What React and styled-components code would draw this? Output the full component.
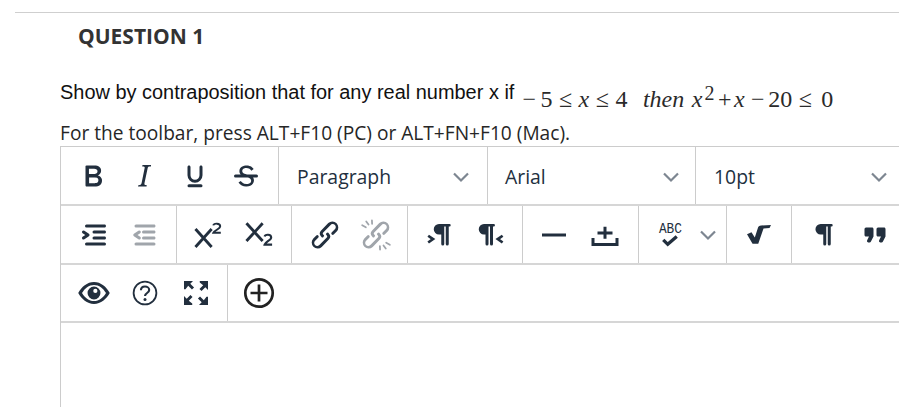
import React from "react";
import styled, { createGlobalStyle } from "styled-components";

const Global = createGlobalStyle`
  html, body { margin: 0; padding: 0; background: #fff; }
  body { width: 899px; height: 407px; overflow: hidden; }
`;
const Page = styled.div`
  width: 899px; height: 407px; overflow: hidden; padding-top: 12px; box-sizing: border-box;
`;
const Rule = styled.div`
  height: 1px; background: #cfcfcf; margin-left: 15px;
`;
const Heading = styled.h2`
  margin: 9px 0 0 78px; font: 700 21px/28px "Open Sans", sans-serif; color: #333;
`;
const Prompt = styled.div`
  margin: 22px 0 0 60px; height: 40px; display: flex; align-items: center;
  font: 19.95px/28px "Liberation Sans", Arial, sans-serif; color: #111; white-space: nowrap;
`;
const Formula = styled.div`
  margin: 14px 0 0 8px; height: 28px; display: flex; align-items: baseline; gap: 6.5px;
  font: 24px/28px "Liberation Serif", "Times New Roman", serif; color: #2a2a2a;
  em { font-style: italic; }
`;
const Tok = styled.span`
  margin-left: ${p => p.$ml || 0}px;
`;
const Power = styled.sup`
  font-size: 20px; line-height: 0; vertical-align: 7px; margin-left: 2px;
`;
const Hint = styled.div`
  margin: 8px 0 0 60px; height: 26px; font: 19.15px/27px "Open Sans", sans-serif; color: #262626; white-space: nowrap;
`;
const Editor = styled.div`
  margin-left: 60px; height: 262px; border-left: 1px solid #ccc; border-top: 1px solid #ccc;
`;
const Row = styled.div`
  display: flex; height: ${p => p.$h}px; border-bottom: 2px solid #d6d6d6;
`;
const Group = styled.div`
  display: flex; align-items: center; height: 100%; box-sizing: border-box;
  width: ${p => p.$w}px; padding-left: ${p => p.$pl || 0}px; flex: none;
  border-right: ${p => (p.$last ? "none" : "1px solid #ccc")};
`;
const Btn = styled.div`
  width: 51px; height: 51px; display: flex; align-items: center; justify-content: center; flex: none;
  color: ${p => (p.$off ? "#a0a5ab" : "#222f3e")};
`;
const Select = styled.div`
  display: flex; align-items: center; justify-content: space-between; height: 100%; box-sizing: border-box; flex: none;
  width: ${p => p.$w}px; padding: 3px ${p => p.$pr}px 0 ${p => p.$pl}px; border-right: ${p => (p.$last ? "none" : "1px solid #ccc")};
  font: 19.4px/28px "Open Sans", sans-serif; color: #222f3e;
`;
const Ic = styled.svg`
  width: 36px; height: 36px; display: block; fill: currentColor; flex: none;
`;
const I = ({ d, children }) => <Ic viewBox="0 0 24 24">{d && <path d={d} />}{children}</Ic>;

const ChevronSvg = styled.svg`
  display: block; flex: none; width: 26px; height: 16px;
`;
const Chevron = () => (
  <ChevronSvg viewBox="0 0 26 16">
    <path d="M6 4.500l7 7 7-7" fill="none" stroke="#7d8691" strokeWidth="2.200" />
  </ChevronSvg>
);

const P = {
  bold: "M7.800 19c-.3 0-.5 0-.6-.2l-.2-.5V5.700c0-.2 0-.4.2-.5l.6-.2h5c1.500 0 2.700.3 3.500 1 .7.600 1.100 1.400 1.100 2.500a3 3 0 01-.6 1.900c-.4.600-1 1-1.600 1.200.4.100.9.300 1.300.6s.8.700 1 1.200c.4.400.5 1 .5 1.600 0 1.300-.4 2.300-1.300 3-.8.700-2.100 1-3.800 1H7.800zm5-8.300c.6 0 1.200-.1 1.600-.5.400-.3.600-.7.600-1.300 0-1.100-.8-1.700-2.300-1.700H9.300v3.500h3.400zm.5 6c.7 0 1.300-.1 1.700-.4.400-.4.600-.9.600-1.500s-.2-1-.7-1.400c-.4-.3-1-.4-2-.4H9.400v3.800h4z",
  italic: "M16.700 4.700l-.1.900h-.3c-.6 0-1 0-1.400.3-.3.300-.4.600-.5 1.100l-2.100 9.800v.6c0 .5.400.8 1.400.8h.2l-.2.800H8l.2-.8h.2c1.100 0 1.800-.5 2-1.500l2-9.800.1-.5c0-.6-.4-.8-1.400-.8h-.3l.2-.9h5.800z",
  under: "M16 5c.6 0 1 .4 1 1v5.500a5 5 0 01-10 0V6c0-.6.400-1 1-1s1 .4 1 1v5.500c0 1.700 1.300 3 3 3s3-1.300 3-3V6c0-.6.400-1 1-1zM8 17.500h8a1 1 0 010 2H8a1 1 0 010-2z",
  strike: "M15.600 8.500c-.5-.7-1-1.100-1.300-1.300-.6-.4-1.300-.6-2-.6-2.700 0-2.800 1.700-2.800 2.100 0 1.600 1.800 2 3.200 2.300 4.400.900 4.600 2.800 4.600 3.900 0 1.400-.7 4.100-5 4.100A6.200 6.200 0 017 16.400l1.500-1.100c.4.600 1.600 2 3.700 2 1.600 0 2.500-.4 3-1.200.4-.8.300-2-.8-2.600-.7-.4-1.600-.7-2.900-1-1-.2-3.900-.8-3.900-3.600C7.600 6 10.300 5 12.400 5c2.900 0 4.200 1.600 4.700 2.400l-1.500 1.100zM5 11h14a1 1 0 010 2H5a1 1 0 010-2z",
  indent: "M7 5h12c.6 0 1 .4 1 1s-.4 1-1 1H7a1 1 0 110-2zm5 4h7c.6 0 1 .4 1 1s-.4 1-1 1h-7a1 1 0 010-2zm0 4h7c.6 0 1 .4 1 1s-.4 1-1 1h-7a1 1 0 010-2zm-5 4h12a1 1 0 010 2H7a1 1 0 010-2zm-2.600-3.800L6.200 12l-1.800-1.200a1 1 0 011.200-1.600l3 2a1 1 0 010 1.600l-3 2a1 1 0 11-1.200-1.600z",
  outdent: "M6 5h12c.6 0 1 .4 1 1s-.4 1-1 1H6a1 1 0 110-2zm5 4h7c.6 0 1 .4 1 1s-.4 1-1 1h-7a1 1 0 010-2zm0 4h7c.6 0 1 .4 1 1s-.4 1-1 1h-7a1 1 0 010-2zm-5 4h12a1 1 0 010 2H6a1 1 0 010-2zM7.600 9.200a1 1 0 011.200 1.600L7 12l1.800 1.200a1 1 0 01-1.200 1.600l-3-2a1 1 0 010-1.600l3-2z",
  link: "M6.200 12.300a1 1 0 011.400 1.400l-2 2a2 2 0 102.800 2.800l4.800-4.800a1 1 0 000-1.400 1 1 0 111.400-1.300 2.900 2.900 0 010 4L9.800 20a4 4 0 01-5.600-5.700l2-2zm11.600-.6a1 1 0 01-1.400-1.400l2-2a2 2 0 10-2.800-2.800L10.800 10.300a1 1 0 000 1.400 1 1 0 11-1.400 1.300 2.900 2.900 0 010-4L14.200 4a4 4 0 015.600 5.700l-2 2z",
  ltr: "M11.500 4.700H19a.8.8 0 010 1.600h-.5V18a1 1 0 01-2 0V6.300h-1V18a1 1 0 01-2 0v-6.300h-1.500a3.500 3.500 0 010-7z",
  rtl: "M8 4.700h6.500a.8.8 0 010 1.600H14V18a1 1 0 01-2 0V6.300h-1V18a1 1 0 01-2 0v-6.300H8a3.500 3.500 0 010-7z",
  para: "M9.800 4.700H17a.8.8 0 010 1.600h-.5V18a1 1 0 01-2 0V6.300h-1V18a1 1 0 01-2 0v-6.300H9.800a3.500 3.500 0 010-7z",
  quote: "M7.500 17h.9c.4 0 .7-.2.9-.6L11 13V8c0-.6-.4-1-1-1H6a1 1 0 00-1 1v4c0 .6.400 1 1 1h2l-1.300 2.700a1 1 0 00.800 1.300zm8 0h.9c.4 0 .7-.2.9-.6L19 13V8c0-.6-.4-1-1-1h-4a1 1 0 00-1 1v4c0 .6.400 1 1 1h2l-1.300 2.700a1 1 0 00.800 1.300z",
  corner: "M4 4h6L8.200 5.800l2.500 2.500-1.400 1.400-2.500-2.500L5 9.500H4z",
};

const Sup = () => (
  <I>
    <g fill="none" stroke="currentColor">
      <path d="M4.300 8l10.800 12M15.100 8L4.300 20" strokeWidth="1.900" />
      <path d="M16.200 5.600c.3-1.500 4.600-1.800 4.600.6 0 1.800-4 2.800-4.600 4.300h5" strokeWidth="1.300" />
    </g>
  </I>
);
const Sub = () => (
  <I>
    <g fill="none" stroke="currentColor">
      <path d="M4.300 4.200l10.800 11.800M15.100 4.200L4.300 16" strokeWidth="1.900" />
      <path d="M16.400 13c.3-1.500 4.400-1.800 4.400.6 0 1.800-3.900 3-4.400 4.800h5" strokeWidth="1.400" />
    </g>
  </I>
);
const Unlink = () => (
  <I d={P.link}>
    <g fill="none" stroke="currentColor" strokeWidth="1.200" strokeLinecap="round">
      <path d="M5.500 3l1.500 2M2.800 5.500l2.400 1.300M9.300 2.300l.1 2.200M18.500 21l-1.500-2M21.200 18.500l-2.400-1.300M14.700 21.700l-.1-2.200" />
    </g>
  </I>
);
const Ltr = () => (
  <I d={P.ltr}>
    <path d="M4.800 12.500l3.200 2.200-3.200 2.300" fill="none" stroke="currentColor" strokeWidth="1.800" />
  </I>
);
const Rtl = () => (
  <I d={P.rtl}>
    <path d="M20.400 12.500l-3.200 2.200 3.200 2.300" fill="none" stroke="currentColor" strokeWidth="1.800" />
  </I>
);
const Hr = () => <I d="M4 11h16v2H4z" />;
const InsertBox = () => (
  <I>
    <g fill="none" stroke="currentColor" strokeWidth="2">
      <path d="M4 14v4.300h16V14M7 10.700h10M12 6.500v8" />
    </g>
  </I>
);
const Spell = () => (
  <Ic viewBox="0 0 24 24">
    <text x="12.300" y="10.700" textAnchor="middle" fontFamily="'Liberation Mono', monospace" fontSize="9.600" textLength="15.300" lengthAdjust="spacingAndGlyphs" fill="currentColor">ABC</text>
    <path d="M7.500 15.200l3 3 6-5.200" fill="none" stroke="currentColor" strokeWidth="2.200" />
  </Ic>
);
const Sqrt = () => (
  <I d="M4 11.500l3-1.400 2.200 3.600 2-6.200c.3-1.100 1-1.700 2.200-1.800l6.600-.4-1 2-4 .4-3.500 10.100H7.700z" />
);
const Eye = () => (
  <I>
    <path fillRule="evenodd" d="M12 4.700c4.600 0 8.300 3.300 10.500 7.300-2.200 4-5.900 7.300-10.500 7.300S3.700 16 1.500 12c2.200-4 5.900-7.300 10.500-7.300zm0 1.900c-3.400 0-6.200 2.300-8 5.400 1.800 3.100 4.600 5.400 8 5.400s6.200-2.300 8-5.400c-1.800-3.100-4.600-5.400-8-5.400z" />
    <path fillRule="evenodd" d="M12 7.700a4.300 4.300 0 110 8.600 4.300 4.300 0 010-8.600zm.9 1.500a1.400 1.400 0 100 2.800 1.400 1.400 0 000-2.800z" />
  </I>
);
const Help = () => (
  <I>
    <g fill="none" stroke="currentColor">
      <circle cx="12" cy="12" r="7.600" strokeWidth="1.200" />
      <path d="M9.300 10.200c0-1.600 1.200-2.500 2.700-2.500s2.800.9 2.800 2.300c0 2-2.800 2-2.800 4" strokeWidth="1.400" />
    </g>
    <circle cx="12" cy="16.300" r="1" />
  </I>
);
const Full = () => (
  <I>
    <path d={P.corner} />
    <path d={P.corner} transform="rotate(90 12 12)" />
    <path d={P.corner} transform="rotate(180 12 12)" />
    <path d={P.corner} transform="rotate(270 12 12)" />
  </I>
);
const AddSvg = styled.svg`
  display: block; width: 36px; height: 36px;
`;
const AddCircle = () => (
  <AddSvg viewBox="0 0 36 36">
    <g fill="none" stroke="#222" strokeWidth="2.700">
      <circle cx="18" cy="18" r="13.700" />
      <path d="M9.500 18h17M18 9.500v17" />
    </g>
  </AddSvg>
);

export default function App() {
  return (
    <Page>
      <Global />
      <Rule />
      <Heading>QUESTION 1</Heading>
      <Prompt>
        Show by contraposition that for any real number x if
        <Formula>
          <Tok>−</Tok><Tok $ml={-2}>5</Tok><Tok>≤</Tok><Tok><em>x</em></Tok><Tok>≤</Tok><Tok>4</Tok>
          <Tok $ml={9}><em>then</em></Tok>
          <Tok $ml={1}><em>x</em><Power>2</Power></Tok>
          <Tok $ml={-3}>+</Tok><Tok $ml={-4}><em>x</em></Tok><Tok>−</Tok><Tok $ml={-3}>20</Tok><Tok>≤</Tok><Tok $ml={3}>0</Tok>
        </Formula>
      </Prompt>
      <Hint>For the toolbar, press ALT+F10 (PC) or ALT+FN+F10 (Mac).</Hint>
      <Editor>
        <Row $h={57}>
          <Group $w={218} $pl={6}>
            <Btn><I d={P.bold} /></Btn>
            <Btn><I d={P.italic} /></Btn>
            <Btn><I d={P.under} /></Btn>
            <Btn><I d={P.strike} /></Btn>
          </Group>
          <Select $w={209} $pl={18} $pr={13}>Paragraph<Chevron /></Select>
          <Select $w={208} $pl={17} $pr={11}>Arial<Chevron /></Select>
          <Select $w={204} $pl={18} $pr={8} $last>10pt<Chevron /></Select>
        </Row>
        <Row $h={57}>
          <Group $w={116} $pl={7}>
            <Btn><I d={P.indent} /></Btn>
            <Btn $off><I d={P.outdent} /></Btn>
          </Group>
          <Group $w={115} $pl={4}>
            <Btn><Sup /></Btn>
            <Btn><Sub /></Btn>
          </Group>
          <Group $w={116} $pl={7}>
            <Btn><I d={P.link} /></Btn>
            <Btn $off><Unlink /></Btn>
          </Group>
          <Group $w={115} $pl={5}>
            <Btn><Ltr /></Btn>
            <Btn><Rtl /></Btn>
          </Group>
          <Group $w={116} $pl={5}>
            <Btn><Hr /></Btn>
            <Btn><InsertBox /></Btn>
          </Group>
          <Group $w={88} $pl={5}>
            <Btn><Spell /></Btn>
            <Chevron />
          </Group>
          <Group $w={65} $pl={6}>
            <Btn><Sqrt /></Btn>
          </Group>
          <Group $w={107} $pl={6} $last>
            <Btn><I d={P.para} /></Btn>
            <Btn><I d={P.quote} /></Btn>
          </Group>
        </Row>
        <Row $h={56}>
          <Group $w={167} $pl={7}>
            <Btn><Eye /></Btn>
            <Btn><Help /></Btn>
            <Btn><Full /></Btn>
          </Group>
          <Group $w={60} $pl={5} $last>
            <Btn><AddCircle /></Btn>
          </Group>
        </Row>
      </Editor>
    </Page>
  );
}
